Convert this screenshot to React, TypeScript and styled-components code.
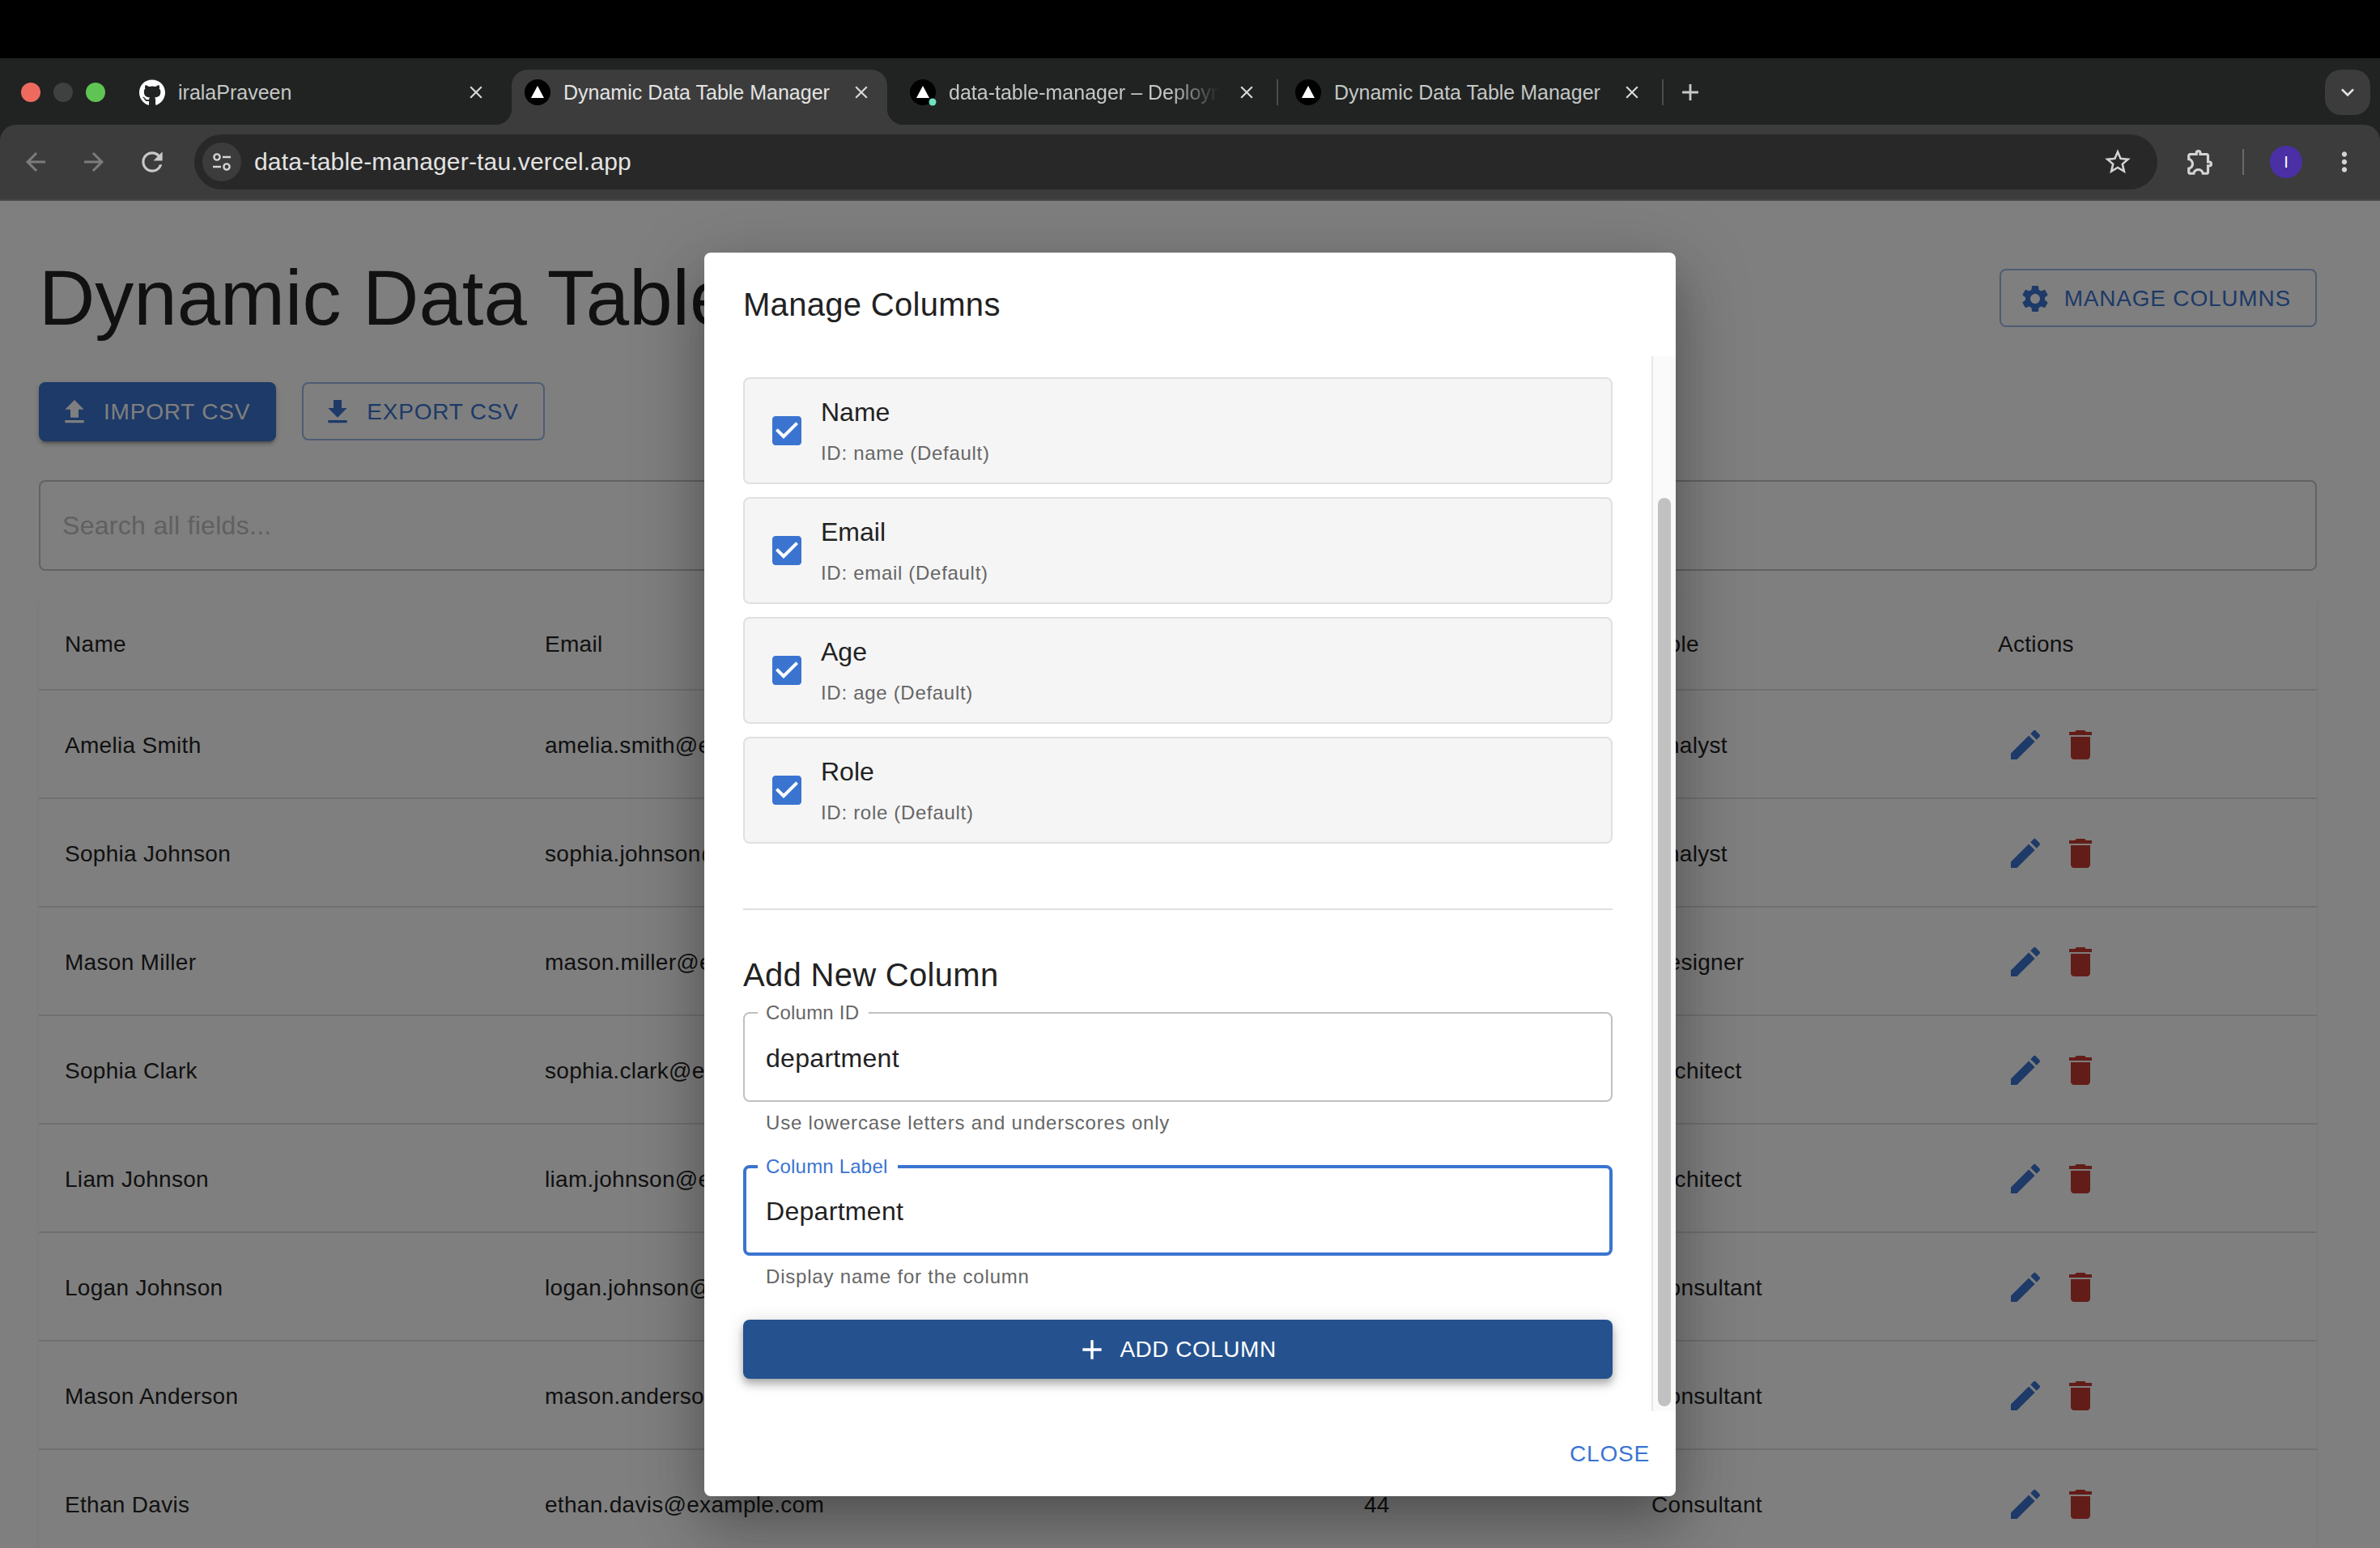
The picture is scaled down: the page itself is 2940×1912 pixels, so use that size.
import styled, { createGlobalStyle } from "styled-components";
import { FaGithub } from "react-icons/fa";
import {
	MdArrowBack,
	MdArrowForward,
	MdRefresh,
	MdStarBorder,
	MdOutlineExtension,
	MdMoreVert,
	MdKeyboardArrowDown,
	MdClose,
	MdAdd,
} from "react-icons/md";

const ICONS = {
	upload: "M9 16h6v-6h4l-7-7-7 7h4zm-4 2h14v2H5z",
	download: "M5 20h14v-2H5zM19 9h-4V3H9v6H5l7 7z",
	settings:
		"M19.14 12.94c.04-.3.06-.61.06-.94 0-.32-.02-.64-.07-.94l2.03-1.58c.18-.14.23-.41.12-.61l-1.92-3.32c-.12-.22-.37-.29-.59-.22l-2.39.96c-.5-.38-1.03-.7-1.62-.94l-.36-2.54c-.04-.24-.24-.41-.48-.41h-3.84c-.24 0-.43.17-.47.41l-.36 2.54c-.59.24-1.13.57-1.62.94l-2.39-.96c-.22-.08-.47 0-.59.22L2.74 8.87c-.12.21-.08.47.12.61l2.03 1.58c-.05.3-.09.63-.09.94s.02.64.07.94l-2.03 1.58c-.18.14-.23.41-.12.61l1.92 3.32c.12.22.37.29.59.22l2.39-.96c.5.38 1.03.7 1.62.94l.36 2.54c.05.24.24.41.48.41h3.84c.24 0 .44-.17.47-.41l.36-2.54c.59-.24 1.13-.56 1.62-.94l2.39.96c.22.08.47 0 .59-.22l1.92-3.32c.12-.22.07-.47-.12-.61l-2.01-1.58zM12 15.6c-1.98 0-3.6-1.62-3.6-3.6s1.62-3.6 3.6-3.6 3.6 1.62 3.6 3.6-1.62 3.6-3.6 3.6z",
	edit: "M3 17.25V21h3.75L17.81 9.94l-3.75-3.75zM20.71 7.04c.39-.39.39-1.02 0-1.41l-2.34-2.34a.9959.9959 0 0 0-1.41 0l-1.83 1.83 3.75 3.75z",
	trash: "M6 19c0 1.1.9 2 2 2h8c1.1 0 2-.9 2-2V7H6zM19 4h-3.5l-1-1h-5l-1 1H5v2h14z",
	plus: "M19 13h-6v6h-2v-6H5v-2h6V5h2v6h6v2z",
};

const MuiIcon = ({ name, size, color }: { name: keyof typeof ICONS; size: number; color?: string }) => (
	<svg width={size} height={size} viewBox="0 0 24 24" fill={color || "currentColor"} style={{ flexShrink: 0 }}>
		<path d={ICONS[name]} />
	</svg>
);

const CheckedBox = () => (
	<svg width="48" height="48" viewBox="0 0 24 24" style={{ flexShrink: 0 }}>
		<rect x="4" y="4" width="16" height="16" fill="#fff" />
		<path
			fill="#3a74d0"
			d="M19 3H5c-1.11 0-2 .9-2 2v14c0 1.1.89 2 2 2h14c1.1 0 2-.9 2-2V5c0-1.1-.9-2-2-2zm-9 14l-5-5 1.41-1.41L10 14.17l7.59-7.59L19 8l-9 9z"
		/>
	</svg>
);

const VercelIcon = ({ dot }: { dot?: boolean }) => (
	<svg width="36" height="36" viewBox="0 0 36 36" style={{ flexShrink: 0 }}>
		<circle cx="16" cy="18" r="16" fill="#000" />
		<path d="M16 10l8 15H8z" fill="#fff" />
		{dot && <circle cx="28" cy="30" r="4.5" fill="#6fe3c1" />}
	</svg>
);

const TuneIcon = () => (
	<svg width="28" height="28" viewBox="0 0 28 28" fill="none" stroke="#d4d4d4" strokeWidth="2.4">
		<circle cx="8" cy="8" r="3.6" />
		<path d="M15 8h10M3 20h10" />
		<circle cx="20" cy="20" r="3.6" />
	</svg>
);

const tabs = [
	{ title: "iralaPraveen", kind: "github" },
	{ title: "Dynamic Data Table Manager", kind: "vercel", active: true },
	{ title: "data-table-manager – Deployment", kind: "deploy", line: true },
	{ title: "Dynamic Data Table Manager", kind: "vercel", line: true },
];

const columns = [
	{ name: "Name", id: "name" },
	{ name: "Email", id: "email" },
	{ name: "Age", id: "age" },
	{ name: "Role", id: "role" },
];

const people = [
	{ name: "Amelia Smith", email: "amelia.smith@example.com", age: 29, role: "Analyst" },
	{ name: "Sophia Johnson", email: "sophia.johnson@example.com", age: 35, role: "Analyst" },
	{ name: "Mason Miller", email: "mason.miller@example.com", age: 41, role: "Designer" },
	{ name: "Sophia Clark", email: "sophia.clark@example.com", age: 27, role: "Architect" },
	{ name: "Liam Johnson", email: "liam.johnson@example.com", age: 38, role: "Architect" },
	{ name: "Logan Johnson", email: "logan.johnson@example.com", age: 31, role: "Consultant" },
	{ name: "Mason Anderson", email: "mason.anderson@example.com", age: 52, role: "Consultant" },
	{ name: "Ethan Davis", email: "ethan.davis@example.com", age: 44, role: "Consultant" },
];

const App = () => {
	return (
		<Root>
			<GlobalStyle />
			<TopBlack />
			<TabStrip>
				<Lights>
					<Light $color="#ee6a5f" />
					<Light $color="#3e4140" />
					<Light $color="#5fc454" />
				</Lights>
				{tabs.map((tab, i) => (
					<TabGroup key={i}>
						{i > 0 && <TabGap $line={tab.line && i > 2} />}
						<Tab $active={tab.active}>
							{tab.kind === "github" ? (
								<GithubSlot>
									<FaGithub size={33} color="#fff" />
								</GithubSlot>
							) : (
								<VercelIcon dot={tab.kind === "deploy"} />
							)}
							<TabTitle $active={tab.active} $fade={tab.kind === "deploy"}>
								{tab.title}
							</TabTitle>
							<MdClose size={26} color="#d8d8d8" style={{ flexShrink: 0 }} />
						</Tab>
					</TabGroup>
				))}
				<TabGap $line />
				<NewTab>
					<MdAdd size={34} color="#c8c8c8" />
				</NewTab>
				<TabSearch>
					<MdKeyboardArrowDown size={32} color="#e3e3e3" />
				</TabSearch>
			</TabStrip>
			<ToolbarBack>
				<Toolbar>
					<NavGroup>
						<NavButton>
							<MdArrowBack size={36} color="#7c7c7c" />
						</NavButton>
						<NavButton>
							<MdArrowForward size={36} color="#7c7c7c" />
						</NavButton>
						<NavButton>
							<MdRefresh size={38} color="#c8c8c8" />
						</NavButton>
					</NavGroup>
					<Address>
						<SiteBadge>
							<TuneIcon />
						</SiteBadge>
						<Url>data-table-manager-tau.vercel.app</Url>
						<MdStarBorder size={38} color="#d4d4d4" />
					</Address>
					<ToolbarEnd>
						<NavButton>
							<MdOutlineExtension size={38} color="#d4d4d4" />
						</NavButton>
						<ToolbarSep />
						<Avatar>I</Avatar>
						<NavButton>
							<MdMoreVert size={38} color="#d4d4d4" />
						</NavButton>
					</ToolbarEnd>
				</Toolbar>
			</ToolbarBack>
			<Viewport>
				<Page>
					<PageHeader>
						<PageTitle>Dynamic Data Table Manager</PageTitle>
						<OutlineButton>
							<MuiIcon name="settings" size={40} />
							Manage Columns
						</OutlineButton>
					</PageHeader>
					<ActionRow>
						<SolidButton>
							<MuiIcon name="upload" size={40} />
							Import CSV
						</SolidButton>
						<OutlineButton>
							<MuiIcon name="download" size={40} />
							Export CSV
						</OutlineButton>
					</ActionRow>
					<SearchInput placeholder="Search all fields..." readOnly />
					<Table>
						<HeadRow>
							<span>Name</span>
							<span>Email</span>
							<span>Age</span>
							<span>Role</span>
							<span>Actions</span>
						</HeadRow>
						{people.map((p) => (
							<BodyRow key={p.email}>
								<span>{p.name}</span>
								<span>{p.email}</span>
								<span>{p.age}</span>
								<span>{p.role}</span>
								<RowActions>
									<RowIconButton>
										<MuiIcon name="edit" size={48} color="#3a74d0" />
									</RowIconButton>
									<RowIconButton>
										<MuiIcon name="trash" size={48} color="#c63a32" />
									</RowIconButton>
								</RowActions>
							</BodyRow>
						))}
					</Table>
				</Page>
				<Scrim>
					<Dialog>
						<DialogTitle>Manage Columns</DialogTitle>
						<DialogBody>
							<DialogContent>
								<ColumnList>
									{columns.map((c) => (
										<ColumnCard key={c.id}>
											<CheckedBox />
											<div>
												<ColumnName>{c.name}</ColumnName>
												<ColumnId>ID: {c.id} (Default)</ColumnId>
											</div>
										</ColumnCard>
									))}
								</ColumnList>
								<Divider />
								<SectionTitle>Add New Column</SectionTitle>
								<Outline>
									<Legend>Column ID</Legend>
									<FieldInput defaultValue="department" readOnly />
								</Outline>
								<HelperText>Use lowercase letters and underscores only</HelperText>
								<Outline $focused>
									<Legend $focused>Column Label</Legend>
									<FieldInput $focused defaultValue="Department" readOnly />
								</Outline>
								<HelperText>Display name for the column</HelperText>
								<AddButton>
									<MuiIcon name="plus" size={40} />
									Add Column
								</AddButton>
							</DialogContent>
							<ScrollTrack>
								<ScrollThumb />
							</ScrollTrack>
						</DialogBody>
						<DialogActions>
							<TextButton>Close</TextButton>
						</DialogActions>
					</Dialog>
				</Scrim>
			</Viewport>
		</Root>
	);
};

export default App;

//STYLES
const GlobalStyle = createGlobalStyle`
	html, body {
		margin: 0;
		padding: 0;
		background: #000;
		overflow: hidden;
	}
	* {
		box-sizing: border-box;
	}
	body, input, button {
		font-family: "Liberation Sans", Arial, sans-serif;
	}
`;

const Root = styled.div`
	display: flex;
	flex-direction: column;
	width: 2940px;
	height: 1912px;
	overflow: hidden;
`;

const TopBlack = styled.div`
	height: 72px;
	background: #000;
`;

const TabStrip = styled.div`
	display: flex;
	align-items: flex-start;
	height: 82px;
	padding-top: 14px;
	background: #202322;
`;

const Lights = styled.div`
	display: flex;
	align-items: center;
	gap: 16px;
	width: 156px;
	height: 56px;
	padding-left: 26px;
`;

const Light = styled.span<{ $color: string }>`
	width: 24px;
	height: 24px;
	border-radius: 50%;
	background: ${(props) => props.$color};
`;

const TabGroup = styled.div`
	display: flex;
`;

const TabGap = styled.div<{ $line?: boolean }>`
	display: flex;
	justify-content: center;
	width: 12px;
	height: 56px;
	padding-top: 12px;

	&::before {
		content: "";
		width: 2px;
		height: 32px;
		background: ${(props) => (props.$line ? "#4a4c4b" : "transparent")};
	}
`;

const Tab = styled.div<{ $active?: boolean }>`
	position: relative;
	display: flex;
	align-items: center;
	width: 464px;
	height: 68px;
	padding: 0 19px 12px 16px;
	border-radius: 20px 20px 0 0;
	background: ${(props) => (props.$active ? "#3c3c3c" : "transparent")};

	${(props) =>
		props.$active &&
		`
		&::before, &::after {
			content: "";
			position: absolute;
			bottom: 0;
			width: 20px;
			height: 20px;
		}
		&::before {
			left: -20px;
			background: radial-gradient(circle at 0 0, transparent 20px, #3c3c3c 20.5px);
		}
		&::after {
			right: -20px;
			background: radial-gradient(circle at 100% 0, transparent 20px, #3c3c3c 20.5px);
		}
	`}
`;

const GithubSlot = styled.span`
	display: flex;
	justify-content: center;
	width: 32px;
	margin-right: 4px;
	flex-shrink: 0;
`;

const TabTitle = styled.span<{ $active?: boolean; $fade?: boolean }>`
	flex: 1;
	margin: 0 21px 0 12px;
	overflow: hidden;
	white-space: nowrap;
	font-size: 25px;
	color: ${(props) => (props.$active ? "#e3e3e3" : "#c4c7c5")};
	${(props) => props.$fade && "mask-image: linear-gradient(to right, #000 82%, transparent 100%);"}
`;

const NewTab = styled.div`
	display: flex;
	align-items: center;
	justify-content: center;
	width: 34px;
	height: 56px;
	margin-left: 11px;
`;

const TabSearch = styled.div`
	display: flex;
	align-items: center;
	justify-content: center;
	width: 56px;
	height: 56px;
	margin-left: auto;
	margin-right: 12px;
	border-radius: 20px;
	background: #3c3c3c;
`;

const ToolbarBack = styled.div`
	background: #202322;
`;

const Toolbar = styled.div`
	display: flex;
	align-items: center;
	height: 94px;
	border-bottom: 2px solid #464646;
	border-radius: 20px 20px 0 0;
	background: #3c3c3c;
`;

const NavGroup = styled.div`
	display: flex;
	gap: 28px;
	padding-left: 22px;
	margin-right: 30px;
`;

const NavButton = styled.div`
	display: flex;
	align-items: center;
	justify-content: center;
	width: 44px;
	height: 44px;
`;

const Address = styled.div`
	display: flex;
	flex: 1;
	align-items: center;
	height: 68px;
	padding: 0 30px 0 10px;
	border-radius: 34px;
	background: #282828;
`;

const SiteBadge = styled.div`
	display: flex;
	align-items: center;
	justify-content: center;
	width: 48px;
	height: 48px;
	border-radius: 50%;
	background: #3c3c3c;
`;

const Url = styled.div`
	flex: 1;
	margin-left: 16px;
	font-size: 30px;
	letter-spacing: 0.17px;
	color: #e3e3e3;
`;

const ToolbarEnd = styled.div`
	display: flex;
	align-items: center;
	gap: 30px;
	padding: 0 22px 0 31px;
`;

const ToolbarSep = styled.div`
	width: 2px;
	height: 32px;
	background: #6a6a6a;
`;

const Avatar = styled.div`
	display: flex;
	align-items: center;
	justify-content: center;
	width: 40px;
	height: 40px;
	margin-left: 2px;
	border-radius: 50%;
	background: #4a2fa5;
	font-size: 20px;
	color: #fff;
`;

const Viewport = styled.div`
	position: relative;
	flex: 1;
	min-height: 0;
	overflow: hidden;
	background: #fff;
`;

const Page = styled.div`
	padding: 64px 78px 0 48px;
`;

const PageHeader = styled.div`
	display: flex;
	align-items: center;
	justify-content: space-between;
	height: 112px;
	margin-bottom: 48px;
`;

const PageTitle = styled.h1`
	margin: 0;
	font-size: 96px;
	font-weight: 400;
	line-height: 112px;
	color: #222;
`;

const ActionRow = styled.div`
	display: flex;
	gap: 32px;
	margin-bottom: 48px;
`;

const OutlineButton = styled.button`
	display: flex;
	align-items: center;
	gap: 16px;
	height: 72px;
	padding: 2px 30px 0 22px;
	border: 2px solid rgba(58, 116, 208, 0.5);
	border-radius: 8px;
	background: transparent;
	font-size: 28px;
	letter-spacing: 0.8px;
	text-transform: uppercase;
	color: #3a74d0;
`;

const SolidButton = styled.button`
	display: flex;
	align-items: center;
	gap: 16px;
	height: 73px;
	padding: 0 32px 0 24px;
	border: none;
	border-radius: 8px;
	background: #3a74d0;
	box-shadow: 0 6px 2px -4px rgba(0, 0, 0, 0.2), 0 4px 4px 0 rgba(0, 0, 0, 0.14), 0 2px 10px 0 rgba(0, 0, 0, 0.12);
	font-size: 28px;
	letter-spacing: 0.8px;
	text-transform: uppercase;
	color: #fff;
`;

const SearchInput = styled.input`
	display: block;
	width: 100%;
	height: 112px;
	margin-bottom: 32px;
	padding: 0 27px;
	border: 2px solid #c4c4c4;
	border-radius: 8px;
	outline: none;
	background: transparent;
	font-size: 32px;
	letter-spacing: 0.3px;

	&::placeholder {
		color: #c0c0c0;
		opacity: 1;
	}
`;

const Table = styled.div`
	border-radius: 8px;
	background: #fff;
	box-shadow: 0 4px 2px -2px rgba(0, 0, 0, 0.1), 0 2px 4px 0 rgba(0, 0, 0, 0.08);
	font-size: 28px;
	letter-spacing: 0.3px;
	color: #222;
`;

const HeadRow = styled.div`
	display: grid;
	grid-template-columns: 593px 1012px 355px 428px 426px;
	align-items: center;
	height: 116px;
	border-bottom: 2px solid #e0e0e0;

	& > span {
		padding: 3px 0 0 32px;
	}
`;

const BodyRow = styled(HeadRow)`
	height: 134px;
`;

const RowActions = styled.div`
	display: flex;
	padding: 2px 0 0 32px;
`;

const RowIconButton = styled.div`
	display: flex;
	padding: 10px;
`;

const Scrim = styled.div`
	position: absolute;
	inset: 0;
	display: flex;
	align-items: center;
	justify-content: center;
	background: rgba(0, 0, 0, 0.5);
`;

const Dialog = styled.div`
	display: flex;
	flex-direction: column;
	width: 1200px;
	height: 1536px;
	border-radius: 8px;
	background: #fff;
	box-shadow: 0 22px 48px -14px rgba(0, 0, 0, 0.2), 0 48px 76px 6px rgba(0, 0, 0, 0.14), 0 18px 92px 16px rgba(0, 0, 0, 0.12);
	color: #222;
`;

const DialogTitle = styled.div`
	flex-shrink: 0;
	padding: 32px 48px;
	font-size: 40px;
	line-height: 64px;
	letter-spacing: 0.3px;
`;

const DialogBody = styled.div`
	display: flex;
	flex: 1;
	min-height: 0;
`;

const DialogContent = styled.div`
	flex: 1;
	min-width: 0;
	padding: 26px 48px 0;
	overflow: hidden;
`;

const ColumnList = styled.div`
	display: flex;
	flex-direction: column;
	gap: 16px;
`;

const ColumnCard = styled.div`
	display: flex;
	align-items: center;
	gap: 18px;
	height: 132px;
	padding-left: 28px;
	border: 2px solid #e0e0e0;
	border-radius: 8px;
	background: #f5f5f5;
`;

const ColumnName = styled.div`
	font-size: 32px;
	line-height: 48px;
`;

const ColumnId = styled.div`
	margin-top: 7px;
	font-size: 24px;
	line-height: 40px;
	letter-spacing: 0.7px;
	color: #666;
`;

const Divider = styled.div`
	height: 2px;
	margin-top: 80px;
	background: #e0e0e0;
`;

const SectionTitle = styled.div`
	margin-top: 48px;
	font-size: 40px;
	line-height: 64px;
	letter-spacing: 0.3px;
`;

const Outline = styled.fieldset<{ $focused?: boolean }>`
	display: flex;
	height: 122px;
	min-width: 0;
	margin: ${(props) => (props.$focused ? "22px" : "3px")} 0 0;
	padding: 0;
	border: ${(props) => (props.$focused ? "4px solid #3a74d0" : "2px solid #c0c0c0")};
	border-radius: 8px;
`;

const Legend = styled.legend<{ $focused?: boolean }>`
	margin-left: ${(props) => (props.$focused ? "14px" : "16px")};
	padding: 0 12px 0 10px;
	font-size: 24px;
	line-height: 24px;
	letter-spacing: 0.2px;
	color: ${(props) => (props.$focused ? "#3a74d0" : "#666")};
`;

const FieldInput = styled.input<{ $focused?: boolean }>`
	width: 100%;
	height: 100%;
	padding: 0 ${(props) => (props.$focused ? "24px" : "26px")} 8px;
	border: none;
	outline: none;
	background: transparent;
	font-size: 32px;
	letter-spacing: 0.3px;
	color: #222;
`;

const HelperText = styled.div`
	margin: 6px 0 0 28px;
	font-size: 24px;
	line-height: 40px;
	letter-spacing: 0.8px;
	color: #666;
`;

const AddButton = styled.button`
	display: flex;
	align-items: center;
	justify-content: center;
	gap: 14px;
	width: 100%;
	height: 73px;
	margin-top: 33px;
	padding: 0 4px 0 0;
	border: none;
	border-radius: 8px;
	background: #25528f;
	box-shadow: 0 4px 8px -2px rgba(0, 0, 0, 0.2), 0 8px 10px 1px rgba(0, 0, 0, 0.14), 0 2px 20px 2px rgba(0, 0, 0, 0.12);
	font-size: 28px;
	letter-spacing: 0.5px;
	text-transform: uppercase;
	color: #fff;
`;

const ScrollTrack = styled.div`
	flex-shrink: 0;
	width: 30px;
	padding: 175px 0 6px 6px;
	border-left: 2px solid #e8e8e8;
	background: #fafafa;
`;

const ScrollThumb = styled.div`
	width: 16px;
	height: 100%;
	border-radius: 8px;
	background: #c1c1c1;
`;

const DialogActions = styled.div`
	display: flex;
	flex-shrink: 0;
	justify-content: flex-end;
	height: 105px;
	padding: 16px;
`;

const TextButton = styled.button`
	height: 73px;
	padding: 0 16px;
	border: none;
	background: transparent;
	font-size: 28px;
	letter-spacing: 0.8px;
	text-transform: uppercase;
	color: #3a74d0;
`;
